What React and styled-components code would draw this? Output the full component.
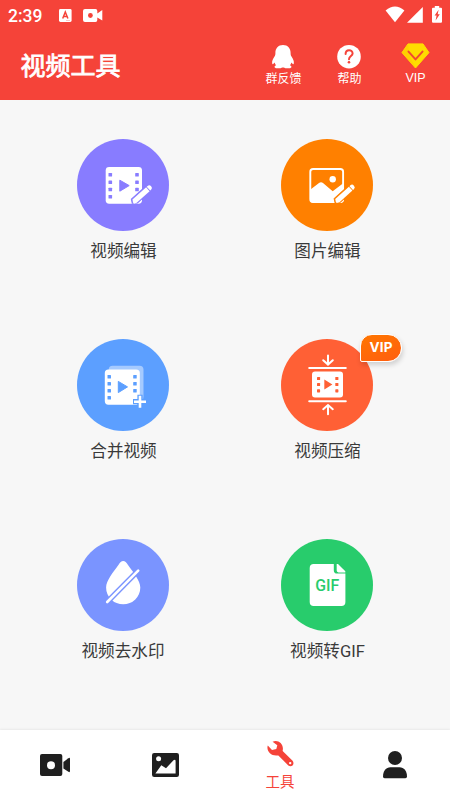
import React from 'react';
import styled, { createGlobalStyle } from 'styled-components';

const GlobalStyle = createGlobalStyle`
  * {
    box-sizing: border-box;
  }

  body {
    margin: 0;
    background: #f7f7f7;
    font-family: Roboto, 'Noto Sans CJK SC', sans-serif;
  }

  svg {
    display: block;
    flex-shrink: 0;
  }
`;

const Screen = styled.div`
  width: 450px;
  height: 800px;
  display: flex;
  flex-direction: column;
  background: #f7f7f7;
  overflow: hidden;
`;

const Header = styled.header`
  height: 100px;
  flex-shrink: 0;
  background: #f54339;
  color: #fff;
`;

const StatusBar = styled.div`
  height: 32px;
  padding: 0 8px;
  display: flex;
  justify-content: space-between;
`;

const StatusGroup = styled.div`
  display: flex;
  align-items: flex-start;
`;

const Clock = styled.span`
  width: 51px;
  padding-top: 6px;
  font-size: 17.5px;
  font-weight: 500;
  line-height: 21px;
`;

const TitleBar = styled.div`
  height: 68px;
  padding-left: 20.5px;
  display: flex;
  justify-content: space-between;
`;

const Title = styled.h1`
  margin: 0;
  padding-top: 16px;
  font-size: 25px;
  font-weight: 400;
  line-height: 38px;
  -webkit-text-stroke: 0.8px #fff;
`;

const Actions = styled.div`
  display: flex;
  padding: 10px 2px 0 0;
`;

const Action = styled.div`
  width: 66px;
  display: flex;
  flex-direction: column;
  align-items: center;
`;

const ActionLabel = styled.span`
  font-family: ${({ $latin }) => ($latin ? "'Liberation Sans', sans-serif" : "'Noto Sans CJK SC', sans-serif")};
  font-size: ${({ $latin }) => ($latin ? '12.5px' : '12px')};
  line-height: 16px;
  margin-top: 1px;
  padding-left: 1px;
`;

const ToolGrid = styled.main`
  flex: 1;
  min-height: 0;
  padding: 39px 21px 0;
  display: grid;
  grid-template-columns: 204px 204px;
  grid-auto-rows: 200px;
`;

const Tool = styled.div`
  display: flex;
  flex-direction: column;
  align-items: center;
  padding-right: ${({ $nudge }) => $nudge || 0}px;
`;

const Disc = styled.div`
  position: relative;
  width: 92px;
  height: 92px;
  border-radius: 50%;
  background: ${({ $color }) => $color};
`;

const ToolLabel = styled.span`
  margin-top: 9px;
  padding-left: 1px;
  font-size: 16.6px;
  line-height: 24px;
  color: #3a3a3a;
`;

const VipBadge = styled.span`
  position: absolute;
  left: 79px;
  top: -5px;
  width: 42px;
  height: 28px;
  border: 1.5px solid #fff;
  border-radius: 12px 14px 14px 2px;
  background: linear-gradient(160deg, #ff7600, #ff5e10);
  box-shadow: 1px 3px 5px rgba(0, 0, 0, 0.16);
  color: #fff;
  font-family: Inter, sans-serif;
  font-size: 13.5px;
  font-weight: 700;
  line-height: 25px;
  letter-spacing: 0.2px;
  text-align: center;
`;

const BottomNav = styled.nav`
  height: 70px;
  flex-shrink: 0;
  display: grid;
  grid-template-columns: 110px 110px 120px 110px;
  background: #fff;
  box-shadow: 0 -1px 2px rgba(0, 0, 0, 0.06);
`;

const NavItem = styled.div`
  display: flex;
  flex-direction: column;
  align-items: center;
  justify-content: center;
  color: ${({ $active }) => ($active ? '#f54339' : '#1f1f1f')};
`;

const NavLabel = styled.span`
  margin-top: 4px;
  font-family: 'Noto Sans CJK SC', sans-serif;
  font-size: 14.5px;
  line-height: 20px;
`;

const Canvas = ({ children }) => (
  <svg width="92" height="92" viewBox="0 0 92 92" fill="#fff">
    {children}
  </svg>
);

const Holes = ({ x, ys, size, color }) =>
  ys.map((y) => <rect key={y} x={x} y={y} width={size} height={size} rx="0.6" fill={color} />);

const Pencil = ({ x, y, color }) => (
  <g transform={`translate(${x} ${y}) rotate(-42)`}>
    <path d="M-1 0 L1 -3.6 H22 Q25.2 -3.6 25.2 0 T22 3.2 H3 Z" fill={color} stroke={color} strokeWidth="1" />
    <path d="M0 0 L1.6 -2.6 H20 V2.6 H2.6 L0 1.4 Z" />
    <path d="M20.8 -2.6 H22 Q24.4 -2.6 24.4 0 T22 2.6 H20.8 Z" />
  </g>
);

const VideoEditIcon = ({ color }) => (
  <Canvas>
    <rect x="28.7" y="28" width="36.3" height="36.7" rx="3.4" />
    <Holes x={31.5} ys={[34, 41.5, 48.7, 56]} size={3.6} color={color} />
    <Holes x={58.2} ys={[34, 41.5, 48.7]} size={3.6} color={color} />
    <path d="M42.8 41.2 L52.2 46.6 L42.8 52.2 Z" fill={color} stroke={color} strokeLinejoin="round" />
    <Pencil x={56} y={63.6} color={color} />
  </Canvas>
);

const ImageEditIcon = ({ color }) => (
  <Canvas>
    <rect x="29.3" y="30" width="32.8" height="33" rx="2.8" fill="none" stroke="#fff" strokeWidth="1.9" />
    <circle cx="51.7" cy="40.3" r="3.2" />
    <path d="M29.5 50.5 L38 44 Q40 42.5 42 44 L51.7 52.2 L62.5 44 V61 Q62.5 63.8 59.5 63.8 H32 Q29.5 63.8 29.5 61 Z" />
    <Pencil x={54.8} y={63} color={color} />
  </Canvas>
);

const MergeIcon = ({ color }) => (
  <Canvas>
    <rect x="31.7" y="26.7" width="34.8" height="35" rx="4" opacity="0.45" />
    <rect x="27.8" y="30.5" width="35" height="35.2" rx="3.6" />
    <Holes x={30.5} ys={[36, 43, 50, 57]} size={3.5} color={color} />
    <Holes x={56.2} ys={[36, 43, 50]} size={3.5} color={color} />
    <path d="M41.3 42.4 L50.5 47.9 L41.3 53.6 Z" fill={color} stroke={color} strokeLinejoin="round" />
    <path d="M63 55.7 V69.7 M56 62.7 H70" stroke={color} strokeWidth="5.2" />
    <path d="M63 56.7 V68.7 M57 62.7 H69" stroke="#fff" strokeWidth="2.6" />
  </Canvas>
);

const CompressIcon = ({ color }) => (
  <Canvas>
    <path
      d="M28.2 29 H64.8 M28.2 62.2 H64.8 M47 16.4 V25 M42.2 21.2 L47 25.6 L51.8 21.2 M47 75.2 V66.5 M42.2 70.2 L47 66 L51.8 70.2"
      fill="none"
      stroke="#fff"
      strokeWidth="2"
      strokeLinecap="round"
    />
    <rect x="31" y="32.6" width="31" height="26" rx="3" />
    <Holes x={36} ys={[38, 44, 50.3]} size={3.1} color={color} />
    <Holes x={54.3} ys={[38, 44, 50.3]} size={3.1} color={color} />
    <path d="M43.3 40.6 L51.4 45.6 L43.3 50.6 Z" fill={color} />
  </Canvas>
);

const WatermarkIcon = ({ color }) => (
  <Canvas>
    <path d="M46.2 22 C48 22 49.4 23.6 51 26 C56 33 63.3 41.5 63.3 48.5 A17.1 16.8 0 0 1 29.1 48.5 C29.1 41.5 36.4 33 41.4 26 C43 23.6 44.4 22 46.2 22 Z" />
    <path d="M28.2 65 L63.2 29.7" stroke={color} strokeWidth="5.4" />
    <path d="M30.2 63 L61.2 31.7" stroke="#fff" strokeWidth="2.6" strokeLinecap="round" />
  </Canvas>
);

const GifIcon = ({ color }) => (
  <Canvas>
    <path d="M32.7 25 H52.8 V31.2 Q52.8 34.6 56.2 34.6 H64.4 V63 Q64.4 67 60.4 67 H32.7 Q28.7 67 28.7 63 V29 Q28.7 25 32.7 25 Z" />
    <path d="M55.7 25 H57 L64.3 32.2 V33.4 H57.5 Q55.7 33.4 55.7 31.6 Z" />
    <text
      x="46.3"
      y="51.7"
      textAnchor="middle"
      textLength="24"
      lengthAdjust="spacingAndGlyphs"
      fontFamily="Roboto, sans-serif"
      fontWeight="500"
      fontSize="15.6"
      fill={color}
    >
      GIF
    </text>
  </Canvas>
);

const tools = [
  { label: '视频编辑', color: '#887cff', Icon: VideoEditIcon },
  { label: '图片编辑', color: '#ff8000', Icon: ImageEditIcon },
  { label: '合并视频', color: '#5c9fff', Icon: MergeIcon },
  { label: '视频压缩', color: '#ff6035', Icon: CompressIcon, vip: true },
  { label: '视频去水印', color: '#7a94ff', Icon: WatermarkIcon, nudge: 1 },
  { label: '视频转GIF', color: '#28cc6c', Icon: GifIcon },
];

function App() {
  return (
    <>
      <GlobalStyle />
      <Screen>
        <Header>
          <StatusBar>
            <StatusGroup>
              <Clock>2:39</Clock>
              {/* keyboard + recorder notifications */}
              <svg width="44" height="32" viewBox="59 0 44 32" fill="#fff">
                <rect x="59" y="9" width="12.6" height="13" rx="1.4" />
                <path d="M62.7 18.6 L65.3 12 L67.9 18.6 M63.6 16.6 H67" fill="none" stroke="#f54339" strokeWidth="1.5" />
                <path d="M66 20.3 H70" stroke="#f54339" strokeWidth="0.6" opacity="0.6" />
                <path d="M85 9 H95.5 Q97.3 9 97.3 11 V13.5 L102.3 10 V20.5 L97.3 17.5 V20 Q97.3 22 95.5 22 H85 Q83 22 83 20 V11 Q83 9 85 9 Z" />
                <circle cx="90.4" cy="15.5" r="2.4" fill="#f54339" />
              </svg>
            </StatusGroup>
            <StatusGroup>
              {/* wifi, signal, charging battery */}
              <svg width="57" height="32" viewBox="385 0 57 32" fill="#fff">
                <path d="M385.6 10.5 Q395 2.4 404.4 10.5 L395 22.3 Z" />
                <path d="M422.8 7 V22.8 H407 Z" />
                <path d="M433 7.7 H434.8 V6 H439.2 V7.7 H441 Q442 7.7 442 8.7 V21.8 Q442 22.8 441 22.8 H433 Q432 22.8 432 21.8 V8.7 Q432 7.7 433 7.7 Z" />
                <path d="M438.6 9.8 L434.6 15.4 H436.6 L435.6 20.4 L439.8 14.2 H437.7 Z" fill="#f54339" />
              </svg>
            </StatusGroup>
          </StatusBar>
          <TitleBar>
            <Title>视频工具</Title>
            <Actions>
              <Action>
                <svg width="24" height="27" viewBox="0 0 24 27" fill="#fff">
                  <path d="M12 3 C16.8 3 19.6 6.4 19.6 11 C19.6 12.4 19.7 13.2 20.5 14.6 C22 17 23.3 19.4 22.8 21.6 C22.4 22.8 21.2 21.8 20.4 20.6 C20.1 21.7 19.6 22.5 19 23.2 C20.2 23.8 20.6 24.4 20.4 25.2 C19.6 26.8 14.4 26.6 12.6 25.5 H11.4 C9.6 26.6 4.4 26.8 3.6 25.2 C3.4 24.4 3.8 23.8 5 23.2 C4.4 22.5 3.9 21.7 3.6 20.6 C2.8 21.8 1.6 22.8 1.2 21.6 C0.7 19.4 2 17 3.5 14.6 C4.3 13.2 4.4 12.4 4.4 11 C4.4 6.4 7.2 3 12 3 Z" />
                </svg>
                <ActionLabel>群反馈</ActionLabel>
              </Action>
              <Action>
                <svg width="24" height="27" viewBox="0 0 24 27">
                  <circle cx="12" cy="14.7" r="11.8" fill="#fff" />
                  <path
                    d="M8.6 12 C8.6 7 15.6 7.2 15.6 11.4 C15.6 14 12 14.1 12 17.2"
                    fill="none"
                    stroke="#f54339"
                    strokeWidth="2"
                    strokeLinecap="round"
                  />
                  <circle cx="12" cy="20.2" r="1.3" fill="#f54339" />
                </svg>
                <ActionLabel>帮助</ActionLabel>
              </Action>
              <Action>
                <svg width="29" height="27" viewBox="0 0 29 27">
                  <path d="M7 1.9 H22 L28 10.6 L14.5 26 L1 10.6 Z" fill="#ffdc00" stroke="#ffdc00" strokeLinejoin="round" />
                  <path d="M1 10.6 L7 1.9 L8 12 L14.5 26 Z" fill="#ffc800" opacity="0.55" />
                  <path
                    d="M7.5 9.6 L14.5 17.4 L21.5 9.6"
                    fill="none"
                    stroke="#f04a32"
                    strokeWidth="2"
                    strokeLinecap="round"
                    strokeLinejoin="round"
                  />
                </svg>
                <ActionLabel $latin>VIP</ActionLabel>
              </Action>
            </Actions>
          </TitleBar>
        </Header>

        <ToolGrid>
          {tools.map(({ label, color, Icon, vip, nudge }) => (
            <Tool key={label} $nudge={nudge}>
              <Disc $color={color}>
                <Icon color={color} />
                {vip && <VipBadge>VIP</VipBadge>}
              </Disc>
              <ToolLabel>{label}</ToolLabel>
            </Tool>
          ))}
        </ToolGrid>

        <BottomNav>
          <NavItem>
            <svg width="30" height="22" viewBox="0 0 30 22" fill="currentColor">
              <rect width="22.3" height="22" rx="2" />
              <path d="M23.4 8 L28.4 4.2 Q30 3.2 30 5 V17 Q30 18.8 28.4 17.8 L23.4 14.4 Z" />
              <circle cx="11" cy="11.2" r="4" fill="#fff" />
            </svg>
          </NavItem>
          <NavItem>
            <svg width="27" height="24" viewBox="0 0 27 24" fill="currentColor">
              <rect width="27" height="24" rx="2.2" />
              <circle cx="6.6" cy="5.7" r="2.5" fill="#fff" />
              <path d="M3.4 20.6 L9.3 12.2 L14 15.2 L21.5 7.3 Q23.6 6 23.6 8.2 V20.6 Z" fill="#fff" />
            </svg>
          </NavItem>
          <NavItem $active>
            <svg width="27" height="27" viewBox="0 0 27 27" fill="currentColor">
              <path d="M5.6 1.8 C10.4 -0.8 16.8 3.4 15.8 9.8 C15.6 10.6 15.6 10.9 15.9 11.2 L25.6 20.8 C28.2 24.2 24.4 27.8 21.3 25.4 L11.6 15.8 C11.2 15.4 10.8 15.4 10 15.5 C4 16.1 -1 10.8 0.8 5.6 L5 9.9 L9.3 9.1 L10.3 5.2 Z" />
              <circle cx="23.2" cy="23.1" r="1.2" fill="#fff" />
            </svg>
            <NavLabel>工具</NavLabel>
          </NavItem>
          <NavItem>
            <svg width="24" height="28" viewBox="0 0 24 28" fill="currentColor">
              <circle cx="12" cy="7" r="7" />
              <path d="M7.5 16.2 H16.5 C21 16.2 24 20 24 25.4 Q24 27.2 22.4 27.2 H1.6 Q0 27.2 0 25.4 C0 20 3 16.2 7.5 16.2 Z" />
            </svg>
          </NavItem>
        </BottomNav>
      </Screen>
    </>
  );
}

export default App;
